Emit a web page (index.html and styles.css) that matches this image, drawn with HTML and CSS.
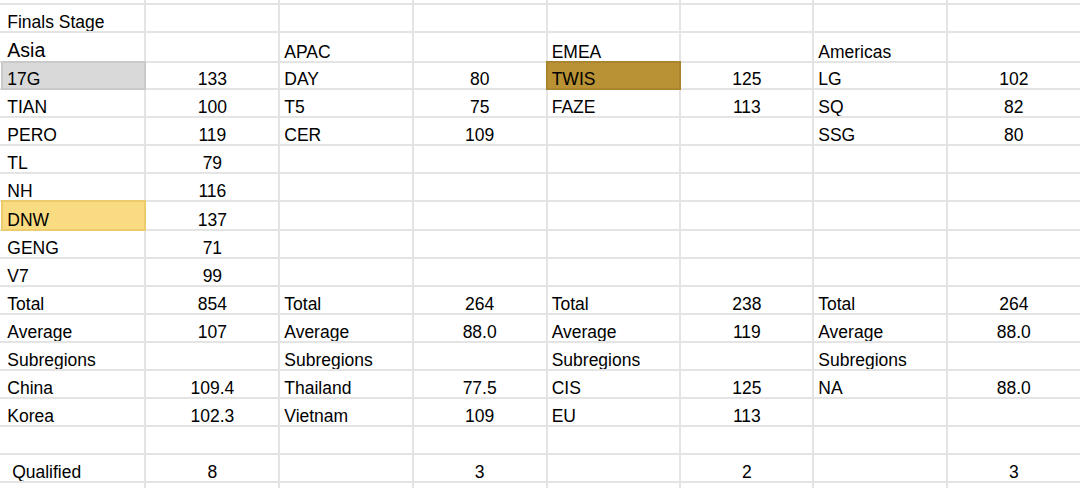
FILE: index.html
```html
<!DOCTYPE html>
<html>
<head>
<meta charset="utf-8">
<link rel="stylesheet" href="styles.css">
</head>
<body>
<div class="sheet">
  <div class="row"><div class="c"></div><div class="c"></div><div class="c"></div><div class="c"></div><div class="c"></div><div class="c"></div><div class="c"></div><div class="c"></div><div class="c"></div></div>
  <div class="row"><div class="c"></div><div class="c">Finals Stage</div><div class="c"></div><div class="c"></div><div class="c"></div><div class="c"></div><div class="c"></div><div class="c"></div><div class="c"></div></div>
  <div class="row"><div class="c"></div><div class="c big">Asia</div><div class="c"></div><div class="c">APAC</div><div class="c"></div><div class="c">EMEA</div><div class="c"></div><div class="c">Americas</div><div class="c"></div></div>
  <div class="row"><div class="c"></div><div class="c fill-gray">17G</div><div class="c n">133</div><div class="c">DAY</div><div class="c n">80</div><div class="c fill-gold">TWIS</div><div class="c n">125</div><div class="c">LG</div><div class="c n">102</div></div>
  <div class="row"><div class="c"></div><div class="c">TIAN</div><div class="c n">100</div><div class="c">T5</div><div class="c n">75</div><div class="c">FAZE</div><div class="c n">113</div><div class="c">SQ</div><div class="c n">82</div></div>
  <div class="row"><div class="c"></div><div class="c">PERO</div><div class="c n">119</div><div class="c">CER</div><div class="c n">109</div><div class="c"></div><div class="c"></div><div class="c">SSG</div><div class="c n">80</div></div>
  <div class="row"><div class="c"></div><div class="c">TL</div><div class="c n">79</div><div class="c"></div><div class="c"></div><div class="c"></div><div class="c"></div><div class="c"></div><div class="c"></div></div>
  <div class="row"><div class="c"></div><div class="c">NH</div><div class="c n">116</div><div class="c"></div><div class="c"></div><div class="c"></div><div class="c"></div><div class="c"></div><div class="c"></div></div>
  <div class="row"><div class="c"></div><div class="c fill-yellow">DNW</div><div class="c n">137</div><div class="c"></div><div class="c"></div><div class="c"></div><div class="c"></div><div class="c"></div><div class="c"></div></div>
  <div class="row"><div class="c"></div><div class="c">GENG</div><div class="c n">71</div><div class="c"></div><div class="c"></div><div class="c"></div><div class="c"></div><div class="c"></div><div class="c"></div></div>
  <div class="row"><div class="c"></div><div class="c">V7</div><div class="c n">99</div><div class="c"></div><div class="c"></div><div class="c"></div><div class="c"></div><div class="c"></div><div class="c"></div></div>
  <div class="row"><div class="c"></div><div class="c">Total</div><div class="c n">854</div><div class="c">Total</div><div class="c n">264</div><div class="c">Total</div><div class="c n">238</div><div class="c">Total</div><div class="c n">264</div></div>
  <div class="row"><div class="c"></div><div class="c">Average</div><div class="c n">107</div><div class="c">Average</div><div class="c n">88.0</div><div class="c">Average</div><div class="c n">119</div><div class="c">Average</div><div class="c n">88.0</div></div>
  <div class="row"><div class="c"></div><div class="c">Subregions</div><div class="c"></div><div class="c">Subregions</div><div class="c"></div><div class="c">Subregions</div><div class="c"></div><div class="c">Subregions</div><div class="c"></div></div>
  <div class="row"><div class="c"></div><div class="c">China</div><div class="c n">109.4</div><div class="c">Thailand</div><div class="c n">77.5</div><div class="c">CIS</div><div class="c n">125</div><div class="c">NA</div><div class="c n">88.0</div></div>
  <div class="row"><div class="c"></div><div class="c">Korea</div><div class="c n">102.3</div><div class="c">Vietnam</div><div class="c n">109</div><div class="c">EU</div><div class="c n">113</div><div class="c"></div><div class="c"></div></div>
  <div class="row"><div class="c"></div><div class="c"></div><div class="c"></div><div class="c"></div><div class="c"></div><div class="c"></div><div class="c"></div><div class="c"></div><div class="c"></div></div>
  <div class="row"><div class="c"></div><div class="c"> Qualified</div><div class="c n">8</div><div class="c"></div><div class="c n">3</div><div class="c"></div><div class="c n">2</div><div class="c"></div><div class="c n">3</div></div>
  <div class="row"><div class="c"></div><div class="c"></div><div class="c"></div><div class="c"></div><div class="c"></div><div class="c"></div><div class="c"></div><div class="c"></div><div class="c"></div></div>
</div>
</body>
</html>
```

FILE: styles.css
```css
html, body {
  margin: 0;
  padding: 0;
  background: #ffffff;
  overflow: hidden;
}

.sheet {
  width: 1080px;
  height: 488px;
  display: grid;
  grid-template-columns: 1.3px 141.2px 131.8px 131.4px 132px 131.8px 130.8px 131.4px 1fr;
  grid-template-rows: 3px 26px 27.5px 25.7px repeat(14, 26.07px) 1fr;
  gap: 2px;
  background: #e4e4e4;
  overflow: hidden;
  font-family: "Liberation Sans", Arial, sans-serif;
  font-size: 17.5px;
  color: #000000;
}

.row {
  display: contents;
}

.c {
  background: #ffffff;
  display: flex;
  align-items: flex-end;
  padding: 0 3px 0 4px;
  line-height: 18px;
  white-space: pre;
  overflow: hidden;
  min-width: 0;
}

.n {
  justify-content: center;
  padding: 0;
}

.big {
  font-size: 19.5px;
  padding-bottom: 2px;
}

.fill-gray {
  background: #d9d9d9;
  box-shadow: 0 0 0 2px #c9c9c9;
}

.fill-yellow {
  background: #f9dc81;
  box-shadow: 0 0 0 2px #ebcb6b;
}

.fill-gold {
  background: #b99235;
  box-shadow: 0 0 0 2px #a8852e;
}
```
